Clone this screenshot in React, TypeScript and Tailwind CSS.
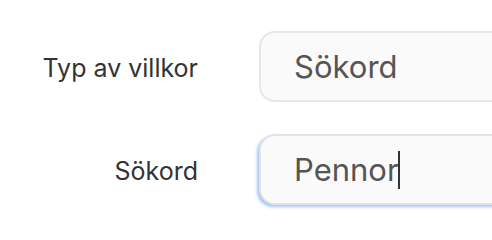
import React from "react";

export default function App() {
  return (
    <div className="w-[492px] h-[220px] overflow-hidden bg-white font-['Inter','Noto_Sans',sans-serif]">
      <div className="flex flex-col gap-[32px] pt-[31px]">
        <div className="flex items-center">
          <div className="w-[198px] shrink-0 whitespace-nowrap text-right text-[25px] leading-none text-[#333333] pt-[4px]">Typ av villkor</div>
          <div className="ml-[61px] w-[300px] h-[71px] shrink-0 rounded-[16px] border-2 border-[#e6e6e6] bg-[#fafafa] flex items-center pl-[33px]">
            <span className="text-[31px] leading-none text-[#555555]">Sökord</span>
          </div>
        </div>
        <div className="flex items-center">
          <div className="w-[198px] shrink-0 whitespace-nowrap text-right text-[25px] leading-none text-[#333333] pt-[4px]">Sökord</div>
          <div className="ml-[61px] w-[300px] h-[71px] shrink-0 rounded-[16px] border-2 border-[#e3e3e3] bg-[#fafafa] shadow-[-2px_2px_3px_rgba(90,150,240,0.55)] flex items-center pl-[33px]">
            <span className="text-[31px] leading-none text-[#555555]">Pennor</span>
            <span className="w-[2px] h-[38px] bg-[#333333] ml-[-1px]" />
          </div>
        </div>
      </div>
    </div>
  );
}
